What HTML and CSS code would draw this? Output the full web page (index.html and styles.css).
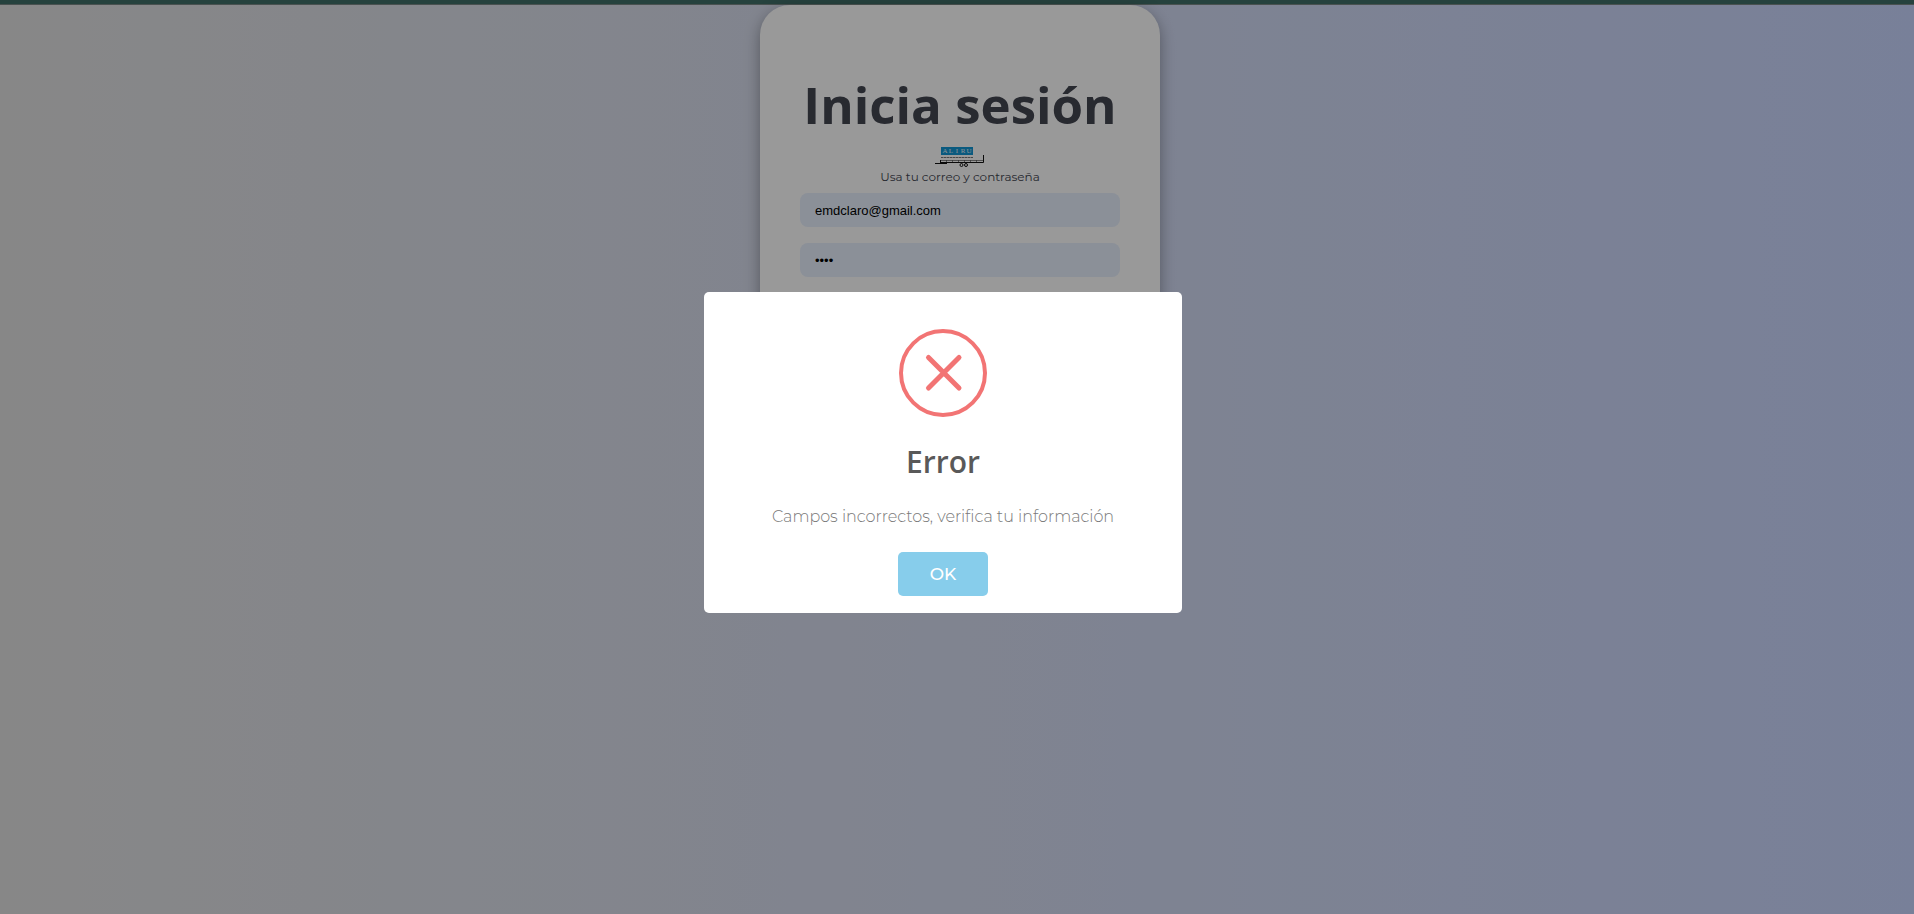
FILE: index.html
```html
<!DOCTYPE html>
<html lang="es">
<head>
<meta charset="utf-8">
<meta name="viewport" content="width=device-width, initial-scale=1">
<title>Inicia sesión</title>
<link rel="stylesheet" href="styles.css">
</head>
<body>
<header class="top-bar"></header>
<main class="page">
  <form class="card">
    <h1 class="card-title">Inicia sesión</h1>
    <svg class="logo" viewBox="0 0 50 20" role="img" aria-label="ALIRU">
      <rect x="6" y="0" width="32" height="8" fill="#1296d4"/>
      <g fill="#e8f4fa" font-family="Liberation Serif, serif" font-size="7" text-anchor="middle">
        <text x="10" y="6">A</text><text x="16" y="6">L</text><text x="22" y="6">I</text><text x="28" y="6">R</text><text x="34" y="6">U</text>
      </g>
      <path d="M6 10.500H38" stroke="#777" stroke-width="1" stroke-dasharray="2 .5 3 .5" fill="none"/>
      <path d="M5 13.500H49M11.500 13V16M17.500 13V16M23.500 13V16M29.500 13V16M35.500 13V16M41.500 13V16" stroke="#555" stroke-width=".7" fill="none"/>
      <path d="M0 16.500H12M5 15.500H48.500V8M5.500 13V16" stroke="#111" stroke-width="1" fill="none"/>
      <circle cx="26.500" cy="18" r="1.500" fill="none" stroke="#111"/>
      <circle cx="31" cy="18" r="1.500" fill="none" stroke="#111"/>
    </svg>
    <p class="card-hint">Usa tu correo y contraseña</p>
    <input class="field" type="email" value="emdclaro@gmail.com" aria-label="Correo">
    <input class="field" type="password" value="1234" aria-label="Contraseña">
  </form>
</main>
<div class="overlay">
  <section class="modal" role="alertdialog" aria-labelledby="modal-title" aria-describedby="modal-text">
    <svg class="modal-icon" viewBox="0 0 88 88" fill="none" stroke="#f27474" aria-hidden="true">
      <circle cx="44" cy="44" r="42" stroke-width="4"/>
      <path d="M29.500 28.500 60 59M60 28.500 29.500 59" stroke-width="5" stroke-linecap="round"/>
    </svg>
    <h2 class="modal-title" id="modal-title">Error</h2>
    <p class="modal-text" id="modal-text">Campos incorrectos, verifica tu información</p>
    <button class="modal-button" type="button">OK</button>
  </section>
</div>
</body>
</html>
```
FILE: styles.css
```css
* {
  box-sizing: border-box;
  margin: 0;
}

body {
  min-height: 100vh;
  background: linear-gradient(to right, #e2e2e2, #c9d6ff);
  font-family: Montserrat, Inter, sans-serif;
}

.top-bar {
  height: 5px;
  background: #406e68;
  border-bottom: 1px solid #7a8886;
}

.page {
  display: flex;
  justify-content: center;
  padding-left: 6px;
}

.card {
  display: flex;
  flex-direction: column;
  align-items: center;
  width: 400px;
  min-height: 480px;
  padding: 64px 40px;
  background: #fff;
  border-radius: 30px;
  box-shadow: 0 5px 15px rgba(0, 0, 0, 0.35);
}

.card-title {
  color: #434651;
  font: 700 51px/70px "Open Sans", sans-serif;
  white-space: nowrap;
}

.logo {
  width: 50px;
  height: 20px;
  margin-top: 8px;
}

.card-hint {
  margin: 1px 0 7px;
  color: #434651;
  font-size: 12px;
  line-height: 18px;
}

.field {
  width: 100%;
  height: 34px;
  margin-bottom: 16px;
  padding: 0 15px;
  border: 0;
  border-radius: 8px;
  background: #e8f0fe;
  color: #000;
  font: 13px "Liberation Sans", sans-serif;
}

.overlay {
  position: fixed;
  inset: 0;
  display: flex;
  align-items: center;
  justify-content: center;
  padding: 0 28px 9px 0;
  background: rgba(0, 0, 0, 0.4);
}

.modal {
  display: flex;
  flex-direction: column;
  align-items: center;
  width: 478px;
  padding: 37px 20px 17px;
  background: #fff;
  border-radius: 5px;
}

.modal-icon {
  width: 88px;
  height: 88px;
}

.modal-title {
  margin-top: 25px;
  color: #595959;
  font: 600 30px/40px "Open Sans", sans-serif;
}

.modal-text {
  margin: 22px 0;
  color: #797979;
  font-size: 16px;
  font-weight: 300;
  line-height: 26px;
}

.modal-button {
  width: 90px;
  height: 44px;
  border: 0;
  border-radius: 5px;
  background: #87cdeb;
  color: #fff;
  font-family: inherit;
  font-size: 17px;
  font-weight: 500;
}
```
